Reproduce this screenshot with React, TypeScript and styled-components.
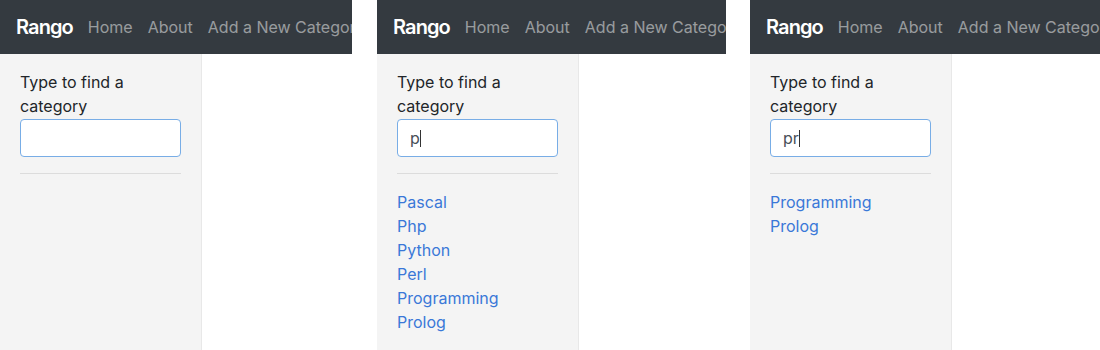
import React from "react";
import styled, { createGlobalStyle } from "styled-components";

const GlobalStyle = createGlobalStyle`
  html, body {
    margin: 0;
    padding: 0;
    background: #ffffff;
  }
  body {
    font-family: Inter, "Liberation Sans", sans-serif;
    font-size: 16px;
    line-height: 24px;
    color: #212529;
  }
`;

const categories = ["Pascal", "Php", "Python", "Perl", "Programming", "Prolog"];

interface Snapshot {
  width: number;
  query: string;
  focused: boolean;
}

const snapshots: Snapshot[] = [
  { width: 352, query: "", focused: false },
  { width: 349, query: "p", focused: true },
  { width: 350, query: "pr", focused: true },
];

const Strip = styled.div`
  display: flex;
  gap: 24px;
  width: 1100px;
  height: 350px;
  overflow: hidden;
`;

const Frame = styled.div<{ $width: number }>`
  display: flex;
  flex-direction: column;
  flex: 0 0 ${(p) => p.$width}px;
  height: 350px;
  overflow: hidden;
  &:nth-child(2) {
    margin-left: 1px;
  }
`;

const Navbar = styled.nav`
  display: flex;
  align-items: center;
  gap: 15px;
  height: 54px;
  padding: 0 16px;
  background: #343a40;
  white-space: nowrap;
  overflow: hidden;
  flex-shrink: 0;
`;

const Brand = styled.a`
  font-size: 20px;
  font-weight: 600;
  letter-spacing: -0.9px;
  color: #ffffff;
  text-decoration: none;
`;

const NavLink = styled.a`
  font-size: 16px;
  color: rgba(255, 255, 255, 0.5);
  text-decoration: none;
`;

const Body = styled.div`
  display: flex;
  flex: 1;
`;

const Sidebar = styled.aside`
  width: 161px;
  padding: 16px 20px 0;
  background: #f4f4f4;
  border-right: 1px solid #e8e8e8;
`;

const Label = styled.label`
  display: block;
  margin-bottom: 1px;
`;

const SearchBox = styled.div`
  position: relative;
  height: 38px;
`;

const SearchInput = styled.input`
  box-sizing: border-box;
  width: 100%;
  height: 38px;
  padding: 0 12px;
  font: inherit;
  color: #495057;
  background: #ffffff;
  border: 1px solid #78ade6;
  border-radius: 4px;
  outline: none;
`;

const CaretLayer = styled.div`
  position: absolute;
  top: 0;
  left: 13px;
  height: 38px;
  display: flex;
  align-items: center;
  pointer-events: none;
  white-space: pre;
`;

const Ghost = styled.span`
  visibility: hidden;
`;

const Caret = styled.span`
  width: 1px;
  height: 17px;
  background: #333;
`;

const Divider = styled.hr`
  margin: 16px 0;
  border: 0;
  border-top: 1px solid #dcdcdc;
`;

const ResultList = styled.ul`
  list-style: none;
  margin: 0;
  padding: 0;
`;

const ResultLink = styled.a`
  display: block;
  color: #3a78d8;
  text-decoration: none;
`;

const Content = styled.main`
  flex: 1;
  background: #ffffff;
`;

const RangoView: React.FC<Snapshot> = ({ width, query, focused }) => {
  const matches = query
    ? categories.filter((c) => c.toLowerCase().startsWith(query))
    : [];
  return (
    <Frame $width={width}>
      <Navbar>
        <Brand href="#">Rango</Brand>
        <NavLink href="#">Home</NavLink>
        <NavLink href="#">About</NavLink>
        <NavLink href="#">Add a New Category</NavLink>
      </Navbar>
      <Body>
        <Sidebar>
          <Label>Type to find a category</Label>
          <SearchBox>
            <SearchInput type="text" value={query} readOnly />
            {focused && (
              <CaretLayer>
                <Ghost>{query}</Ghost>
                <Caret />
              </CaretLayer>
            )}
          </SearchBox>
          <Divider />
          <ResultList>
            {matches.map((m) => (
              <li key={m}>
                <ResultLink href="#">{m}</ResultLink>
              </li>
            ))}
          </ResultList>
        </Sidebar>
        <Content />
      </Body>
    </Frame>
  );
};

export default function App() {
  return (
    <>
      <GlobalStyle />
      <Strip>
        {snapshots.map((s, i) => (
          <RangoView key={i} {...s} />
        ))}
      </Strip>
    </>
  );
}
